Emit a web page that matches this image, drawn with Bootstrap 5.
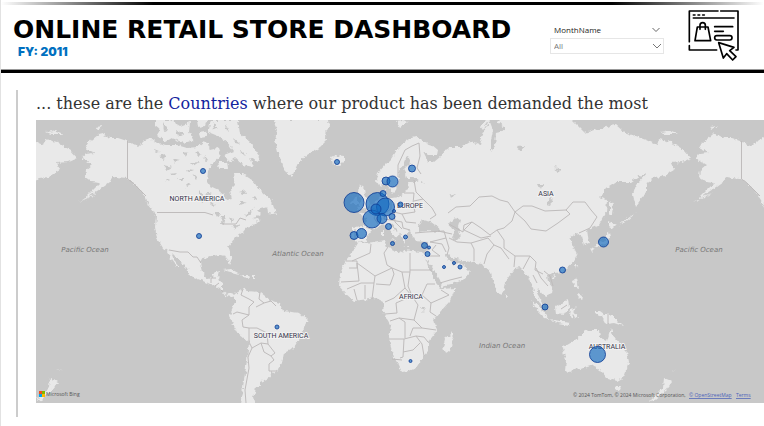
<!DOCTYPE html>
<html lang="en">
<head>
<meta charset="utf-8">
<meta name="viewport" content="width=device-width, initial-scale=1">
<title>Online Retail Store Dashboard</title>
<link href="https://cdn.jsdelivr.net/npm/bootstrap@5.3.0/dist/css/bootstrap.min.css" rel="stylesheet">
<style>
  body { font-family: "Open Sans", sans-serif; background: #fff; border-left: 1px solid #e2e2e2; }
  .top-rule { height: 3px; margin-top: 2px; background: linear-gradient(90deg, #fff 0%, #000 20%, #000 80%, #fff 100%); }
  .brand-bar { height: 68px; border-bottom: 3px solid #000; box-shadow: inset 0 -1px #999; padding: 0 18px 0 12px; }
  .brand-title { font: 700 25px/32px "DejaVu Sans", sans-serif; color: #000; margin: 9px 0 0; white-space: nowrap; }
  .brand-year { font: 900 12px/12px Inter, sans-serif; color: #0070c0; margin: 0 0 0 5px; }
  .slicer { width: 114px; margin: 17px 16px 0 0; font-size: 8px; line-height: 16px; }
  .slicer label { color: #252423; }
  .slicer-btn { line-height: 0; }
  .slicer .form-select { height: 16px; min-height: 0; padding: 0 16px 0 3px; border: 1px solid #e6e6e6; border-radius: 0; font-size: 8px; line-height: 14px; color: #777; background-image: none; }
  .select-chevron { right: 2px; top: 5px; pointer-events: none; }
  .shop-icon { margin-top: -1px; }
  .story { margin: 17px 0 9px 15px; padding: 0 0 14px 18px; border-left: 2px solid #ccc; }
  .story-title { font: 400 16px/27px "DejaVu Serif", serif; color: #333; margin: 0; padding-bottom: 3px; }
  .story-title a { color: #12239e; text-decoration: none; }
  .world-map { background: #c8c8c8; width: 100%; height: auto; }
  .land { fill: #e9e9e9; }
  .sea { fill: #c8c8c8; }
  .borders { fill: none; stroke: #bfbcbc; stroke-width: 1; }
  .continent { font: 7px Roboto, sans-serif; fill: #35354a; text-anchor: middle; paint-order: stroke; stroke: #f2f2f2; stroke-width: 2px; }
  .ocean { font: italic 7px "DejaVu Sans", sans-serif; fill: #777; text-anchor: middle; }
  .credit { font: 5px "Open Sans", sans-serif; fill: #555; }
  .credit-link { fill: #4c62b8; text-decoration: underline; }
  .bubbles circle { fill: #116ac0; fill-opacity: .65; stroke: #123f97; stroke-opacity: .85; stroke-width: 1; }
</style>
</head>
<body>
<div class="top-rule"></div>
<header class="brand-bar d-flex align-items-start">
  <div class="flex-grow-1">
    <h1 class="brand-title">ONLINE RETAIL STORE DASHBOARD</h1>
    <p class="brand-year">FY: 2011</p>
  </div>
  <div class="slicer flex-shrink-0">
    <div class="d-flex justify-content-between align-items-center ps-1 pe-1">
      <label for="month">MonthName</label>
      <button type="button" class="slicer-btn btn p-0 border-0" aria-label="Slicer options"><svg width="8" height="6" viewBox="0 0 8 6" fill="none" stroke="#666"><path d="M.5 1 4 4.500 7.500 1"/></svg></button>
    </div>
    <div class="position-relative">
      <select id="month" class="form-select"><option>All</option></select>
      <svg class="select-chevron position-absolute" width="10" height="6" viewBox="0 0 10 6" fill="none" stroke="#777"><path d="M1 1 5 5 9 1"/></svg>
    </div>
  </div>
  <svg class="shop-icon flex-shrink-0" width="66" height="62" viewBox="0 0 198 186" fill="none" stroke="#000" stroke-width="5" stroke-linejoin="round" stroke-linecap="round" role="img" aria-label="Online shop">
    <path d="M28 113V21H114M122 21H174V138H168M28 125V138H110M40 42H162M104 68H158M104 82H130"/>
    <path d="M40 33H74" stroke-dasharray="5 9"/>
    <path d="M52 69H84L92 110H45ZM60 76V64Q60 56 68 56T76 64V76"/>
    <rect x="104" y="95" width="52" height="13" rx="6.500"/>
    <path d="M116 116 162 130 149 140 168 158 158 168 140 149 130 162Z" fill="#fff"/>
  </svg>
</header>
<main class="story">
  <h2 class="story-title">... these are the <a href="#map">Countries</a> where our product has been demanded the most</h2>
  <svg id="map" class="world-map d-block" viewBox="36 120 728 283" role="img" aria-label="World map of demand by country">
    <defs>
      <filter id="coast" x="-5%" y="-5%" width="110%" height="110%">
        <feTurbulence type="fractalNoise" baseFrequency=".25" numOctaves="2" seed="4" result="n"/>
        <feDisplacementMap in="SourceGraphic" in2="n" scale="5" xChannelSelector="R" yChannelSelector="G"/>
      </filter>
      <g id="world">
        <g class="land">
          <!-- North and Central America -->
          <path d="M85 148 88 143 98 135 102 134 110 138 118 138 127 141 138 147 145 140 150 138 157 143 167 145 177 145 187 148 197 147 204 141 208 143 210 150 218 148 221 156 213 163 208 171 207 182 210 187 223 193 227 200 232 199 230 190 235 185 233 174 243 174 252 180 260 190 272 201 271 206 257 210 262 215 253 218 260 220 255 225 247 227 243 232 235 238 228 247 230 254 232 261 230 265 226 256 220 255 211 256 203 258 200 263 202 272 207 278 212 277 213 273 220 271 218 278 219 281 223 283 223 292 227 295 233 293 236 296 232 297 225 296 220 288 211 285 203 281 190 276 187 268 177 258 171 252 174 260 180 267 177 267 171 259 167 251 163 248 157 238 155 227 156 215 152 208 145 197 137 186 127 179 117 178 112 177 109 182 102 187 93 193 83 200 92 191 100 183 92 182 85 177 86 170 92 165 87 162 82 158 85 154 95 153Z"/>
          <path d="M155 120H170L180 126 190 122 189 132 194 140 184 143 172 138 165 142 157 135 160 130 155 126Z"/>
          <path d="M196 120H207L205 126 197 127ZM211 120H238L240 134 250 142 260 157 257 162 250 157 254 167 243 165 235 158 229 162 224 155 234 151 228 143 218 136 208 132ZM217 162 227 162 228 168 219 169ZM199 132 205 131 206 137 200 138Z"/>
          <path d="M267 205 273 205 276 214 268 213ZM146 202 154 209 153 212Z"/>
          <path d="M273 120 277 130 275 140 278 152 282 165 287 173 292 177 294 172 298 163 307 155 320 147 327 140 325 132 329 128 328 120Z"/>
          <path d="M223 270 231 269 240 274 234 273ZM241 275 248 275 249 278 242 277ZM252 276 255 276 255 278 252 278Z"/>
          <!-- South America -->
          <path d="M235 293 243 288 247 291 260 292 270 300 280 303 283 311 300 313 308 320 302 332 299 340 292 349 284 353 282 363 276 372 270 371 271 377 260 382 261 386 256 386 255 393 253 397 255 404H240L243 387 247 360 249 342 238 333 229 317 232 310 235 303Z"/>
          <!-- British Isles and Iceland -->
          <path d="M358 210 370 207 371 202 365 196 364 188 359 184 358 193 363 199 359 204ZM351 204 358 204 358 197 354 196ZM331 157 335 155 344 156 344 161 339 166 333 165Z"/>
          <!-- Eurasia -->
          <path d="M381 196 382 190 386 188 387 199 399 197 404 193 409 189 408 183 419 180 413 178 406 178 404 169 411 162 407 156 404 164 398 172 399 180 396 190 392 194 388 187 385 182 380 187 376 180 378 173 385 165 392 158 397 150 403 143 412 137 417 136 423 142 432 145 438 150 437 155 427 155 423 152 428 162 434 162 440 157 445 150 450 147 462 147 470 142 480 145 482 137 486 127 490 122 493 130 491 140 491 152 495 146 496 133 500 132 505 128 498 122 502 118H570L574 122 585 133 594 130 607 127 616 125 624 132 646 140 657 145 659 139 671 142 684 150 691 158 682 162 671 163 674 170 662 177 654 178 646 183 646 193 636 207 633 195 636 185 647 173 641 175 631 182 617 182 609 187 599 197 607 200 606 212 599 225 587 230 589 243 584 245 582 237 577 233 570 238 573 246 577 254 573 263 568 267 563 272 553 273 547 275 548 282 553 288 552 293 545 296 538 288 537 293 542 302 544 307 540 303 535 297 533 287 530 280 525 272 520 267 515 268 505 282 503 292 500 295 495 287 490 270 485 268 482 264 470 262 461 260 452 258 445 253 448 260 455 264 461 263 470 272 463 280 450 285 442 287 440 280 432 267 425 258 424 254 429 249 429 242 415 241 412 235 410 231 407 233 408 238 405 243 401 236 394 226 389 222 393 229 400 234 395 238 390 230 383 224 376 227 371 231 367 236 365 241 358 243 352 239 352 227 365 226 366 219 360 214 366 212 371 207 377 201Z"/>
          <path d="M394 239 395 241 390 240ZM381 231 384 231 384 236 381 236ZM404 246 409 246 409 247ZM480 126 486 120H490L483 130ZM396 121 402 120 408 122 400 128Z"/>
          <!-- Africa -->
          <path d="M358 243 366 243 385 240 387 247 394 250 402 253 404 250 411 251 422 252 424 255 428 265 432 274 436 283 441 289 455 288 450 301 440 312 434 319 437 331 428 342 428 351 423 357 416 368 409 371 402 372 399 366 394 357 388 338 391 326 383 312 384 302 376 298 361 300 354 301 346 294 339 286 340 274 346 260 352 253Z"/>
          <path d="M452 331 454 337 450 350 445 354 443 347 445 339 450 335Z"/>
          <!-- South-east Asia and Oceania -->
          <path d="M531 300 541 308 549 319 545 318 538 311ZM549 319 560 321 570 323 569 325 558 323ZM555 307 562 303 568 299 569 307 564 315 556 314ZM571 309 578 307 573 311 578 317 575 318 573 313 572 318 570 316ZM573 280 577 278 579 288 574 286ZM577 293 583 295 582 300 578 297ZM505 294 507 297 505 298ZM575 264 578 264 576 269ZM551 277 555 275 554 279Z"/>
          <path d="M594 311 600 311 604 314 611 314 617 320 623 326 614 323 606 324 602 317 597 315Z"/>
          <path d="M562 348 574 341 584 332 589 330 599 330 600 337 607 341 611 328 614 338 627 352 629 362 624 377 617 381 607 378 602 372 599 371 594 365 584 368 574 370 568 373 565 370 566 360ZM614 386 621 386 619 391 616 390Z"/>
          <path d="M664 378 669 380 672 382 666 390 655 400 650 401 663 388Z"/>
          <!-- Japan and Sakhalin -->
          <path d="M610 200 613 204 612 214 610 215ZM609 221 616 225 612 229 609 227ZM609 231 610 239 606 244 598 246 593 247 604 240ZM590 248 594 250 592 252Z"/>
        </g>
        <g class="sea">
          <path d="M418 226 422 220 431 222 439 228 440 232 426 231 419 232ZM449 224 456 217 460 220 458 227 461 236 456 241 452 238 454 232Z"/>
          <path d="M159 156 166 154 164 160ZM163 165 172 167 167 170ZM170 174 177 173 174 176ZM178 178 184 178 181 181ZM190 163 199 162 193 166ZM193 176 197 175 196 180ZM199 190 204 196 203 203 199 198ZM187 169 193 170 188 172ZM213 213 222 213 219 216ZM222 216 226 216 224 225 221 223ZM229 217 233 219 231 223ZM232 227 240 224 236 229ZM244 215 254 208 247 217ZM239 192 246 190 244 194ZM251 197 258 198 254 200ZM240 201 246 203 240 205Z"/>
          <path d="M155 150 160 152 156 153ZM172 158 180 160 175 163ZM183 152 188 153 185 156ZM195 152 202 154 197 157ZM205 156 208 160 204 162ZM166 178 170 180 167 181ZM186 183 191 185 187 187ZM206 192 212 194 207 196ZM210 201 215 205 211 206ZM213 122 218 128 214 130ZM225 124 230 132 226 130ZM233 138 240 144 235 143ZM240 150 246 156 241 154ZM224 140 230 146 225 148ZM163 122 168 130 164 132ZM176 130 184 134 178 137Z"/>
          <path d="M546 204 553 198 550 205ZM517 147 525 146 521 152ZM538 184 543 184 541 190ZM555 165 560 171 557 173ZM450 196 456 193 451 199ZM421 181 424 183 421 184ZM420 307 426 307 424 312Z"/>
        </g>
        <g class="land">
          <path d="M98 193 90 197 79 202 89 196ZM52 130 64 134 56 133ZM56 369 62 371 58 370ZM96 127 103 126 99 129ZM660 132 668 131 678 134 665 134ZM637 212 628 220 618 226 627 219Z"/>
        </g>
      </g>
      <g id="frontiers" class="borders">
        <path d="M127.500 141V179L133 183 138 188 146 196M157 212.500H205L213 215M222 224 236 224 240 218 246 220M169 250 180 252 188 252 193 257 197 257 201 263M211 283 211 278 216 278M219 283 215 286M223 292 221 290"/>
        <path d="M243 289 241 295 249 299 254 302 249 307 249 315 237 312 233 314M249 315 242 320 243 327 249 328 249 342M260 292 259 299 264 303 256 307M264 303 271 301 276 306M249 328 257 328 267 333 268 344 261 343 252 348 249 342M261 343 264 352 271 356 275 353 268 344M271 356 274 360 269 364 269 371 277 371M252 348 248 357 249 368 245 390 246 403"/>
        <path d="M346 261 357 261 357 268 349 268M357 263 375 276 392 268M357 263 359 281 341 282M375 276 374 283 361 283 347 289M374 283 372 299M365 285 365 299M354 289 357 300M392 268 394 274 390 285 376 284M388 247 384 253 387 265 392 268 402 272 410 272V253M371 244 370 253 352 261M410 270H432M402 272 405 288 394 298 385 302M410 272 408 286 412 296 422 295 427 284 435 284M405 288 412 296 396 303 397 313 385 314M422 295 431 303 449 295 441 290M431 303 430 312 436 316M412 296 418 305 414 320 399 318 390 321M414 320 422 328 436 330M389 339H404L416 336 424 337 428 342M404 339 403 357 400 358M416 336 422 344 424 356M403 352 413 350 420 343M399 318 405 322 405 338M392 359 402 360M422 328 413 328 410 336"/>
        <path d="M398 177 398 165 405 150 412 146M412 146 419 143 420 156 417 168 421 174M414 180 416 192 423 199 432 208 436 215 430 219M404 193 414 193 413 204 400 208M413 204 415 212 402 214 394 212M423 199 414 201M391 201 391 209 385 213 378 211 371 207M385 213 384 219 391 220 402 222 403 228 410 230M378 211 374 218 378 224M366 227 373 230M355 229 355 240M402 214 406 222 416 223M394 212 395 222 402 229"/>
        <path d="M415 233 426 232 444 231 446 238 430 242M438 231 452 234M446 238 449 248 447 255M430 242 442 244 446 252M436 245 432 250 440 256 428 256M440 283 450 280 462 277M449 238 457 242 471 243 474 249 474 261M471 243 488 238 494 245 487 254 484 264M448 213 456 207 470 206 479 197 492 196 500 200 508 202 515 212 512 221 504 228 497 230 490 235 481 228 472 222 464 225 463 232 449 224M472 222 464 230 481 238 491 236M515 212 523 206 532 206 545 211 566 210 570 214 558 223 546 231 531 229 525 221 515 212M566 210 573 202 585 202 591 210 597 217 590 228 579 233M497 230 504 240 504 248 515 256 530 256 536 262 535 270 543 274M515 256 514 267M530 256 523 269M536 268 541 278 548 286M533 275 537 283M494 245 501 248 509 259M544 271 550 276 553 286M561 309 567 305M608 313V324"/>
      </g>
    </defs>
    <g filter="url(#coast)">
      <use href="#world"/><use href="#world" x="-614"/><use href="#world" x="614"/>
    </g>
    <use href="#frontiers"/><use href="#frontiers" x="614"/>
    <g class="continent">
      <text x="197" y="201">NORTH AMERICA</text><text x="281" y="338">SOUTH AMERICA</text>
      <text x="410" y="208">EUROPE</text><text x="411" y="299">AFRICA</text>
      <text x="546" y="196">ASIA</text><text x="607" y="349">AUSTRALIA</text>
    </g>
    <g class="ocean">
      <text x="85" y="252">Pacific Ocean</text><text x="699" y="252">Pacific Ocean</text>
      <text x="298" y="256">Atlantic Ocean</text><text x="502" y="348">Indian Ocean</text>
    </g>
    <g class="bubbles">
      <circle cx="203" cy="171" r="2.500"/><circle cx="199" cy="236" r="2.500"/><circle cx="337" cy="162" r="2.500"/>
      <circle cx="277" cy="327" r="2"/><circle cx="354" cy="202.500" r="10"/><circle cx="377.500" cy="204" r="11.500"/>
      <circle cx="385.500" cy="207" r="9"/><circle cx="372" cy="219" r="9"/><circle cx="376" cy="209" r="5"/>
      <circle cx="382" cy="218.500" r="5"/><circle cx="383" cy="193.500" r="3"/><circle cx="386" cy="181" r="4"/>
      <circle cx="392.500" cy="181.500" r="5.500"/><circle cx="412" cy="168.500" r="3.500"/><circle cx="400.500" cy="204.500" r="2.500"/>
      <circle cx="394" cy="211" r="1.500"/><circle cx="392" cy="216.500" r="3"/><circle cx="388.500" cy="226.500" r="3"/>
      <circle cx="354" cy="235.500" r="4"/><circle cx="361.500" cy="233.500" r="5"/><circle cx="392.500" cy="243.500" r="2"/>
      <circle cx="405.500" cy="237" r="2"/><circle cx="424.500" cy="245.500" r="3"/><circle cx="429" cy="247.500" r="1.500"/>
      <circle cx="427.500" cy="254" r="2.500"/><circle cx="454" cy="263" r="1.500"/><circle cx="460" cy="267" r="2"/>
      <circle cx="444" cy="267" r="1.500"/><circle cx="410.500" cy="361" r="1.500"/><circle cx="562.500" cy="270" r="3"/>
      <circle cx="545" cy="307" r="3"/><circle cx="603.500" cy="242" r="5"/><circle cx="597.500" cy="354.500" r="8"/>
    </g>
    <g>
      <path fill="#f25022" d="M39 391H42V394H39Z"/><path fill="#7fba00" d="M42 391H45V394H42Z"/>
      <path fill="#00a4ef" d="M39 394H42V397H39Z"/><path fill="#ffb900" d="M42 394H45V397H42Z"/>
    </g>
    <g class="credit">
      <text x="46" y="396">Microsoft Bing</text>
      <text x="573" y="397">© 2024 TomTom, © 2024 Microsoft Corporation,</text>
      <a href="#osm"><text class="credit-link" x="689" y="397">© OpenStreetMap</text></a>
      <a href="#terms"><text class="credit-link" x="736" y="397">Terms</text></a>
    </g>
  </svg>
</main>
<script src="https://cdn.jsdelivr.net/npm/bootstrap@5.3.0/dist/js/bootstrap.bundle.min.js"></script>
</body>
</html>
